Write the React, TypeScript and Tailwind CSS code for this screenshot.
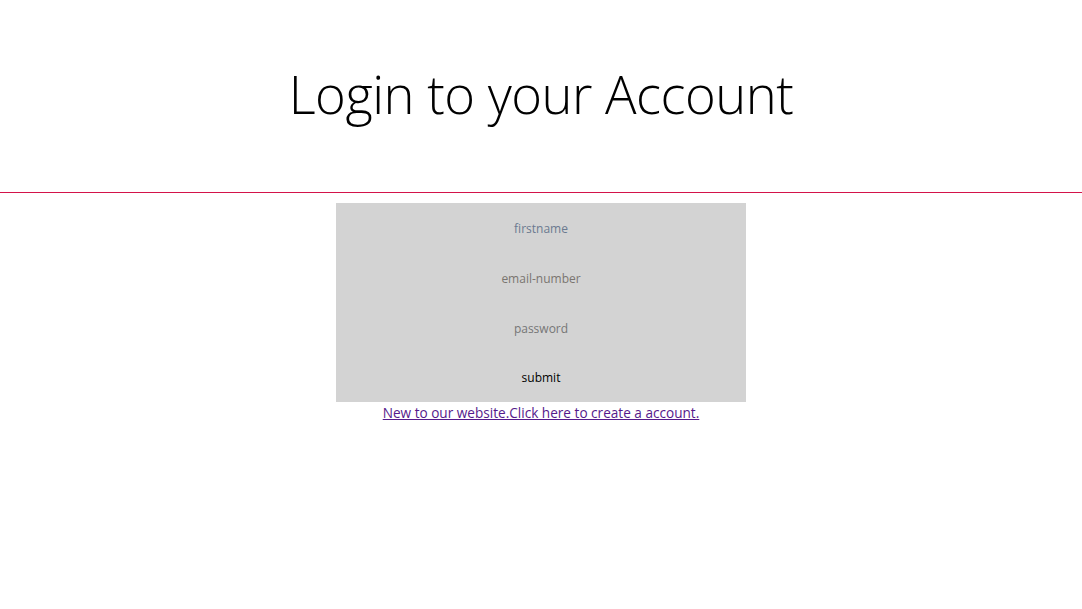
import React from 'react'

const fields = [
  { name: 'firstname', type: 'text', color: 'placeholder:text-[#6b7a90]' },
  { name: 'email-number', type: 'text', color: 'placeholder:text-[#7a7570]' },
  { name: 'password', type: 'password', color: 'placeholder:text-[#767676]' },
]

const App = () => {
  return (
    <div className="min-h-[609px] bg-white font-['Open_Sans',sans-serif]">
      <header className="h-[193px] border-b border-[#d3134a] flex items-center justify-center">
        <h1 className="text-[52.5px] font-light text-black leading-none -mt-[3px] tracking-[-0.5px]">
          Login to your Account
        </h1>
      </header>
      <form className="w-[410px] mx-auto mt-[10px] bg-[#d3d3d3] flex flex-col">
        {fields.map((f) => (
          <input
            key={f.name}
            type={f.type}
            placeholder={f.name}
            className={`h-[50px] bg-transparent text-center text-[12px] outline-none ${f.color}`}
          />
        ))}
        <button type="button" className="h-[49px] text-[12px] text-black">
          submit
        </button>
      </form>
      <div className="text-center leading-[18px] mt-[1px]">
        <a href="#" className="text-[13.6px] text-[#551a8b] underline">
          New to our website.Click here to create a account.
        </a>
      </div>
    </div>
  )
}

export default App
